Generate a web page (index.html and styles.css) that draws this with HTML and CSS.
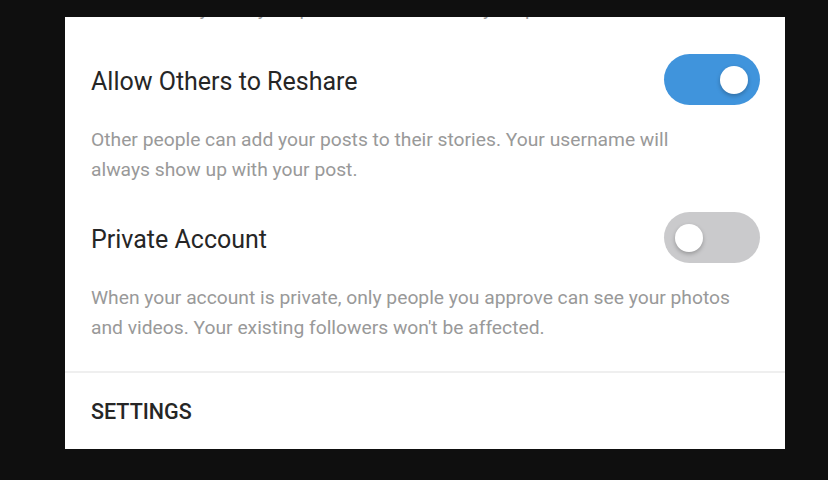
FILE: index.html
```html
<!DOCTYPE html>
<html>
<head>
<meta charset="utf-8">
<link rel="stylesheet" href="styles.css">
</head>
<body>
<div class="panel">
  <section class="item item-clipped">
    <p class="desc">Automatically save your photos and videos to your phone.</p>
  </section>
  <section class="item">
    <div class="head">
      <span class="title">Allow Others to Reshare</span>
      <span class="toggle on"><span class="knob"></span></span>
    </div>
    <p class="desc">Other people can add your posts to their stories. Your username will<br>always show up with your post.</p>
  </section>
  <section class="item">
    <div class="head">
      <span class="title">Private Account</span>
      <span class="toggle off"><span class="knob"></span></span>
    </div>
    <p class="desc">When your account is private, only people you approve can see your photos<br>and videos. Your existing followers won't be affected.</p>
  </section>
  <div class="divider"></div>
  <div class="section-label">SETTINGS</div>
</div>
</body>
</html>
```
FILE: styles.css
```css
html, body {
  margin: 0;
  padding: 0;
  background: #0f0f0f;
  font-family: Roboto, "Noto Sans", sans-serif;
}
.panel {
  margin: 17px 0 0 65px;
  width: 720px;
  height: 432px;
  background: #ffffff;
  overflow: hidden;
  display: flex;
  flex-direction: column;
}
.item {
  padding: 0 25px 0 26px;
}
.item-clipped {
  margin-top: -20px;
  padding-bottom: 6px;
}
.item + .item {
  margin-top: 27px;
}
.head {
  display: flex;
  align-items: center;
  justify-content: space-between;
  height: 51px;
}
.title {
  padding-top: 4px;
  font-size: 25px;
  color: #262626;
}
.desc {
  margin: 20px 0 0 0;
  font-size: 19.25px;
  line-height: 30px;
  color: #999999;
  white-space: nowrap;
}
.item-clipped .desc {
  margin-top: 0;
  line-height: 24px;
}
.toggle {
  position: relative;
  width: 96px;
  height: 51px;
  border-radius: 26px;
  flex: none;
}
.toggle.on { background: #4094dc; }
.toggle.off { background: #cacacc; }
.knob {
  position: absolute;
  top: 11.5px;
  width: 28px;
  height: 28px;
  border-radius: 50%;
  background: #ffffff;
  box-shadow: 0 2px 4px rgba(0,0,0,0.25);
}
.toggle.on .knob { right: 12px; }
.toggle.off .knob { left: 11px; }
.divider {
  margin-top: 28px;
  height: 2px;
  background: #efefef;
}
.section-label {
  padding: 0 26px;
  height: 76px;
  display: flex;
  align-items: center;
  font-size: 21.5px;
  font-weight: 500;
  color: #262626;
}
```
